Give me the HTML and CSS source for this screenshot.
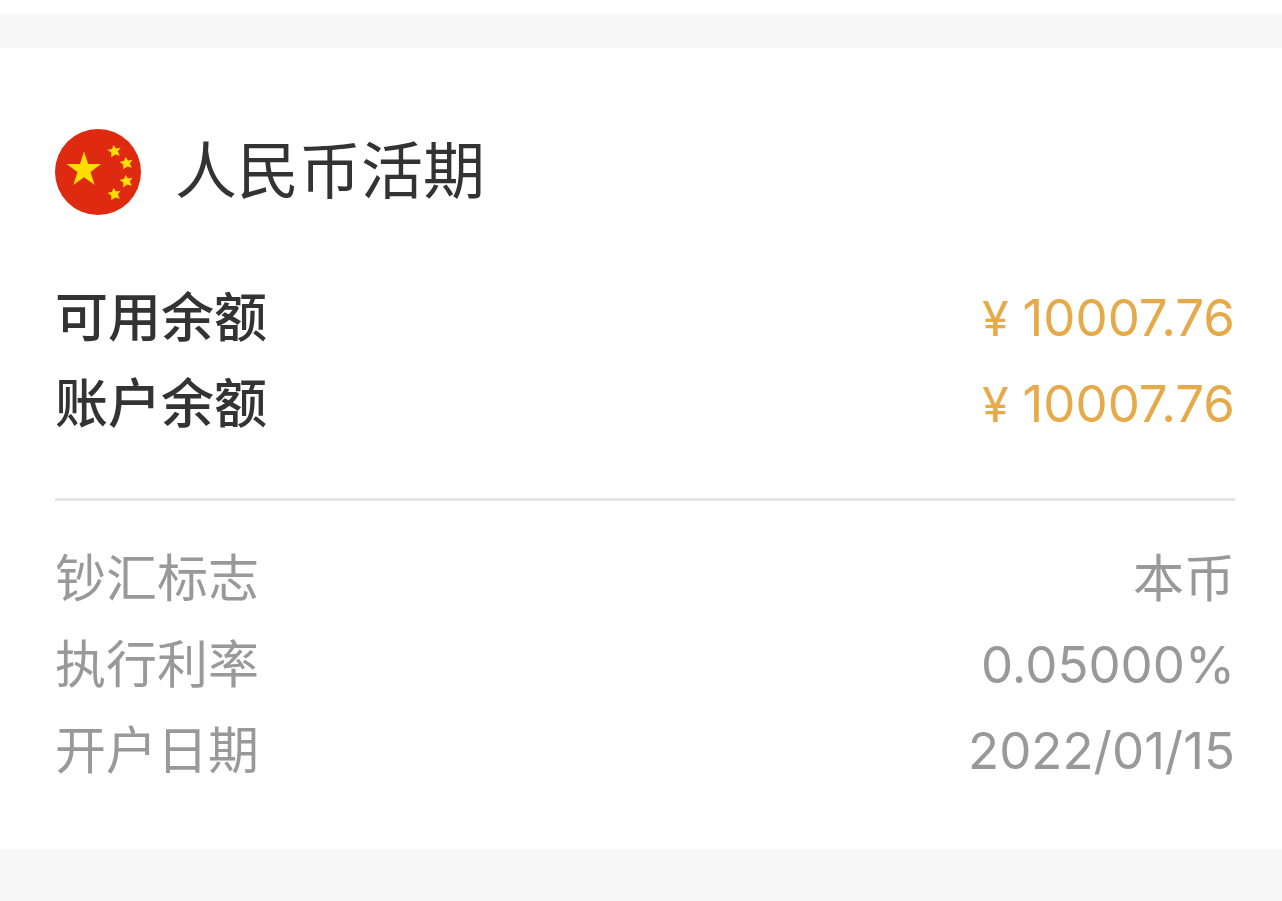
FILE: index.html
```
<!DOCTYPE html>
<html lang="zh-CN">
<head>
	<meta charset="utf-8">
	<meta name="viewport" content="width=device-width, initial-scale=1">
	<title>人民币活期</title>
	<link rel="stylesheet" href="styles.css">
</head>

<body>
	<main class="card">
		<div class="title">
			<svg class="flag" viewBox="0 0 86 86" aria-hidden="true">
				<circle cx="43" cy="43" r="43" fill="#de2a10"/>
				<g fill="#ffde00">
					<path d="M29 22.500l4.200 12.500h12.800L35.500 43l4.200 13L29 48.300 18.300 56 22.500 43 11.500 35H25z"/>
					<path id="star" d="M58.500 16l2.500 3.500 4.500-.8-2.700 3.700 2 4.400-4.500-1.300-4 2.700v-4.600l-3.800-2.600 4.600-1.300z"/>
					<use href="#star" x="12" y="12"/>
					<use href="#star" x="12" y="30"/>
					<use href="#star" y="43"/>
				</g>
			</svg>
			<h1>人民币活期</h1>
		</div>

		<dl class="balance">
			<div class="row">
				<dt>可用余额</dt>
				<dd><span class="yen">¥</span>10007.76</dd>
			</div>
			<div class="row">
				<dt>账户余额</dt>
				<dd><span class="yen">¥</span>10007.76</dd>
			</div>
		</dl>

		<dl class="detail">
			<div class="row">
				<dt>钞汇标志</dt>
				<dd>本币</dd>
			</div>
			<div class="row">
				<dt>执行利率</dt>
				<dd>0.05000%</dd>
			</div>
			<div class="row">
				<dt>开户日期</dt>
				<dd>2022/01/15</dd>
			</div>
		</dl>
	</main>
</body>
</html>
```
FILE: styles.css
```
*{
	box-sizing: border-box;
}

body{
	margin: 0;
	padding: 14px 0 52px;
	background: linear-gradient(#fff 14px, #f7f7f7 14px);
	font-family: Inter, "Noto Sans CJK SC", sans-serif;
}

.card{
	margin-top: 34px;
	padding: 73px 47px 55px 55px;
	background: #fff;
}

.title{
	display: flex;
	align-items: center;
	gap: 34px;
	height: 102px;
}

.flag{
	width: 86px;
	height: 86px;
}

h1{
	margin: 0;
	color: #333;
	font-size: 62px;
	font-weight: 400;
	line-height: 102px;
}

dl{
	margin: 0;
}

dt, dd{
	margin: 0;
}

.row{
	display: flex;
	justify-content: space-between;
	line-height: 86px;
}

.balance{
	padding: 52px 0 51px;
	border-bottom: 3px solid #e5e5e5;
	font-size: 53px;
}

.balance dt{
	color: #333;
	font-weight: 500;
}

.balance dd{
	color: #e5aa4a;
	font-size: 51px;
}

.yen{
	margin-right: 14px;
	font-size: 48px;
	line-height: 1;
}

.detail{
	padding-top: 35px;
	color: #999;
	font-size: 51px;
}
```
